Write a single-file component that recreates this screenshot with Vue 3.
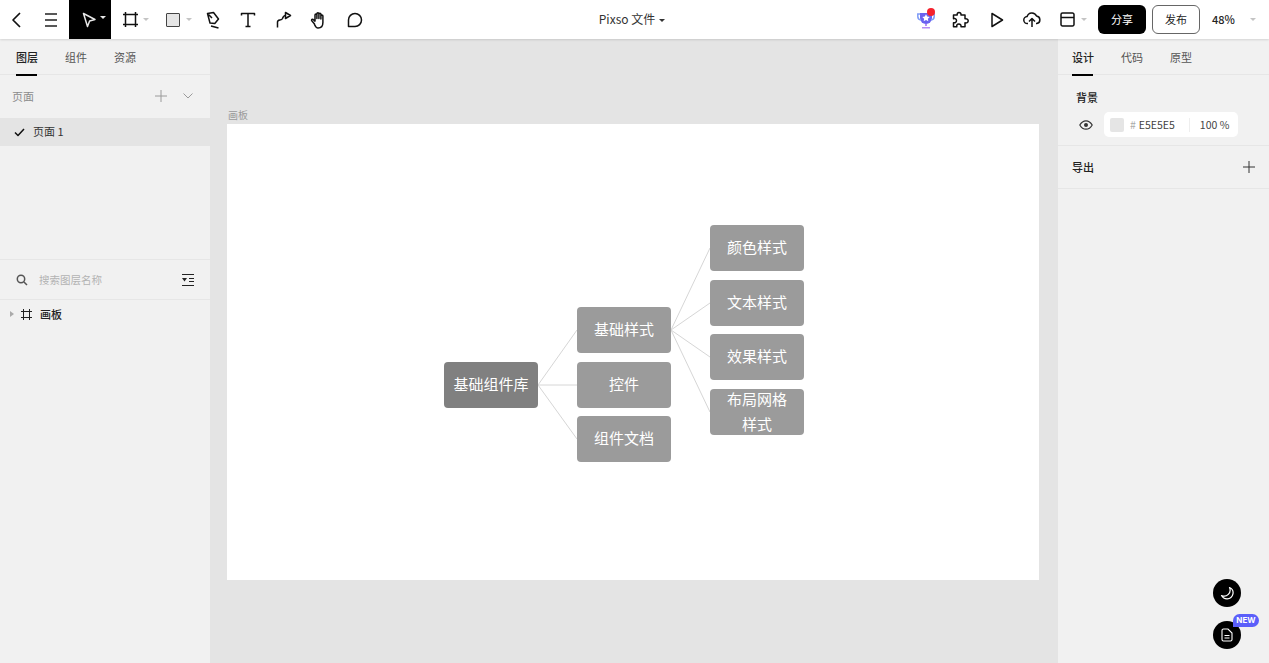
<template>
  <div class="editor">
    <header class="topbar">
      <div class="tools">
        <button class="tool tool-back" type="button">
          <svg width="16" height="18" viewBox="0 0 16 18"><path d="M11 2 4 9l7 7" class="ln back" /></svg>
        </button>
        <button class="tool tool-menu" type="button">
          <svg width="16" height="14" viewBox="0 0 16 14"><path d="M2 1h12M2 7h12M2 13h12" class="ln menu" /></svg>
        </button>
        <button class="tool tool-select" type="button">
          <svg width="16" height="16" viewBox="0 0 16 16"><path d="M2.500 1.500 14 7.500 8.600 9 6.500 14.500Z" class="ln thin white" /></svg>
          <span class="caret white"></span>
        </button>
        <button class="tool tool-drop tool-frame" type="button">
          <svg width="15" height="15" viewBox="0 0 15 15"><path d="M2.500 0v15M12.500 0v15M0 2.500h15M0 12.500h15" class="ln thin" /></svg>
          <span class="caret"></span>
        </button>
        <button class="tool tool-drop tool-shape" type="button">
          <span class="rect-icon"></span>
          <span class="caret"></span>
        </button>
        <button class="tool tool-icon" type="button">
          <svg width="16" height="18" viewBox="0 0 16 18"><path d="M2.500 2.500 8.500 1.500 13.500 8 9.800 12.500 5 12ZM2.500 2.500 7 7M6 15l7.500 2" class="ln thin" /></svg>
        </button>
        <button class="tool tool-icon" type="button">
          <svg width="16" height="16" viewBox="0 0 16 16"><path d="M1.500 3.500V1.500h13v2M8 1.500v13M5.500 14.500h5" class="ln thin" /></svg>
        </button>
        <button class="tool tool-icon" type="button">
          <svg width="16" height="18" viewBox="0 0 16 18"><path d="M1.500 16.500V11C1.500 8 5.500 10 6.500 7.500 7 6 7.500 4.500 9.500 4.500" class="ln thin" /><path d="M9.500 1.500 14.500 4.500 9.500 7.500Z" class="ln thin" /></svg>
        </button>
        <button class="tool tool-icon" type="button">
          <svg width="18" height="18" viewBox="0 0 18 18"><path d="M4.500 13 1.800 9.800c-.8-1.100.7-2.100 1.600-1.200l1.600 1.500V4c0-1.300 1.900-1.300 1.900 0v3.500V2.700c0-1.300 2-1.300 2 0v4.800V3.300c0-1.300 2-1.300 2 0v4.700-3c0-1.300 2-1.300 2 0v6.500c0 3.200-1.800 5.500-4.800 5.500H8c-1.600 0-2.500-1.200-3.500-3.500Z" class="ln thin" /></svg>
        </button>
        <button class="tool tool-icon" type="button">
          <svg width="16" height="16" viewBox="0 0 16 16"><path d="M1.500 14.500V8a6.500 6.500 0 1 1 6.500 6.500Z" class="ln thin" /></svg>
        </button>
      </div>
      <div class="doc-title">Pixso 文件<span class="caret dark"></span></div>
      <div class="actions">
        <span class="action trophy">
          <svg width="18" height="18" viewBox="0 0 18 18">
            <path d="M3 2h12v5a6 6 0 0 1-12 0Z" fill="#6a62f0" />
            <path d="M3 3H0.800v2.500C.8 7.500 2 8.800 4 9M15 3h2.200v2.500c0 2-1.200 3.300-3.200 3.500" fill="none" stroke="#7f9cf7" stroke-width="1.500" />
            <path d="M8 13h2v2H8Z" fill="#b68cf5" />
            <path d="M5 16h8v1.500H5Z" fill="#b68cf5" />
            <path d="m9 3.300 1.200 2.300 2.500.4-1.800 1.800.4 2.500L9 9.100l-2.300 1.200.4-2.500L5.300 6l2.500-.4Z" fill="#fff" />
          </svg>
          <i class="red-dot"></i>
        </span>
        <span class="action">
          <svg width="18" height="18" viewBox="0 0 18 18"><path d="M7 1.500c1.500 0 2.200 1.100 2 2.500h4v3.800c1.700-.3 3.200.3 3.200 2s-1.500 2.300-3.200 2v4h-4c.3-1.700-.6-2.800-2.200-2.800S4.400 14 4.800 15.800H1.500v-4c1.700.2 3-.6 3-2.200S3.200 7.300 1.500 7.700V4h3.700C5 2.600 5.600 1.500 7 1.500Z" class="ln thin" /></svg>
        </span>
        <span class="action">
          <svg width="14" height="16" viewBox="0 0 14 16"><path d="M2 1.500 12.500 8 2 14.500Z" class="ln thin" /></svg>
        </span>
        <span class="action">
          <svg width="18" height="16" viewBox="0 0 18 16"><path d="M5 11.500H4.500a3.500 3.500 0 0 1-.4-7A5 5 0 0 1 13.500 4a3.800 3.800 0 0 1 .3 7.500H13M9 15V7M6 9.500 9 6.500l3 3" class="ln thin" /></svg>
        </span>
        <span class="action layout">
          <svg width="15" height="15" viewBox="0 0 15 15"><path d="M1 2.500A1.500 1.500 0 0 1 2.500 1h10A1.500 1.500 0 0 1 14 2.500v10a1.500 1.500 0 0 1-1.500 1.500h-10A1.500 1.500 0 0 1 1 12.500ZM1 5.500h13" class="ln thin" /></svg>
          <span class="caret"></span>
        </span>
        <button class="btn btn-share" type="button">分享</button>
        <button class="btn btn-publish" type="button">发布</button>
        <span class="zoom">48%</span>
        <span class="caret zoom-caret"></span>
      </div>
    </header>

    <div class="workspace">
      <aside class="panel">
        <nav class="tabs tabs-left">
          <span v-for="(tab, i) in leftTabs" :key="tab" class="tab" :class="{ active: i === 0 }">{{ tab }}</span>
        </nav>
        <section class="pages">
          <div class="pages-head">
            <span>页面</span>
            <svg class="plus-grey" width="12" height="12" viewBox="0 0 12 12"><path d="M6 0v12M0 6h12" /></svg>
            <svg class="chev-grey" width="10" height="6" viewBox="0 0 10 6"><path d="m.5.500 4.500 4.500L9.500.500" /></svg>
          </div>
          <div class="page-row">
            <svg width="11" height="9" viewBox="0 0 11 9"><path d="m1 4.500 3 3L10 1" class="ln thin" /></svg>
            <span>页面 1</span>
          </div>
        </section>
        <div class="search">
          <svg width="12" height="12" viewBox="0 0 12 12"><circle cx="5" cy="5" r="3.700" class="ln thin grey" /><path d="m8 8 3 3" class="ln thin grey" /></svg>
          <span class="search-text">搜索图层名称</span>
          <svg class="filter" width="12" height="12" viewBox="0 0 12 12"><path d="M0 .500h12M0 11.500h12M7 4.500h5M7 7.500h5" stroke="#222" fill="none" /><path d="M0 4h5L2.500 7.500Z" fill="#222" /></svg>
        </div>
        <div class="layer">
          <i class="layer-caret"></i>
          <svg width="11" height="11" viewBox="0 0 11 11"><path d="M2.500 0v11M8.500 0v11M0 2.500h11M0 8.500h11" stroke="#222" fill="none" /></svg>
          <span>画板</span>
        </div>
      </aside>

      <main class="canvas">
        <span class="board-label">画板</span>
        <div class="board">
          <svg class="links" width="812" height="456" viewBox="0 0 812 456">
            <path v-for="link in links" :key="link" :d="link" />
          </svg>
          <div
            v-for="node in nodes"
            :key="node.text"
            class="node"
            :class="{ root: node.root }"
            :style="{ left: node.x + 'px', top: node.y + 'px' }"
          >{{ node.text }}</div>
        </div>
      </main>

      <aside class="panel panel-right">
        <nav class="tabs tabs-right">
          <span v-for="(tab, i) in rightTabs" :key="tab" class="tab" :class="{ active: i === 0 }">{{ tab }}</span>
        </nav>
        <section class="bg-section">
          <h3>背景</h3>
          <div class="bg-row">
            <svg width="14" height="10" viewBox="0 0 14 10"><path d="M.8 5C2.500 2 4.500.8 7 .8S11.500 2 13.200 5C11.500 8 9.500 9.200 7 9.200S2.500 8 .8 5Z" class="ln small" /><circle cx="7" cy="5" r="2" fill="#333" /></svg>
            <div class="color-field">
              <i class="swatch"></i>
              <span class="hash">#</span>
              <span class="hex">E5E5E5</span>
              <i class="divider"></i>
              <span class="percent">100 %</span>
            </div>
          </div>
        </section>
        <section class="export">
          <h3>导出</h3>
          <svg width="12" height="12" viewBox="0 0 12 12"><path d="M6 0v12M0 6h12" stroke="#333" fill="none" /></svg>
        </section>
        <div class="float-buttons">
          <button class="round" type="button">
            <svg width="14" height="14" viewBox="0 0 14 14"><path d="M9.500 1.500A6 6 0 0 1 1.500 9.500 6.200 6.200 0 0 0 7 12.800a5.900 5.900 0 0 0 2.500-11.300Z" fill="none" stroke="#fff" stroke-width="1.200" stroke-linejoin="round" /></svg>
          </button>
          <button class="round" type="button">
            <svg width="12" height="14" viewBox="0 0 12 14"><path d="M1 2.500A1.500 1.500 0 0 1 2.500 1H7l4 4v6.500A1.500 1.500 0 0 1 9.500 13h-7A1.500 1.500 0 0 1 1 11.500ZM3.500 7.500h5M3.500 10h5" fill="none" stroke="#fff" stroke-width="1.100" /></svg>
            <span class="badge">NEW</span>
          </button>
        </div>
      </aside>
    </div>
  </div>
</template>

<script setup>
const leftTabs = ['图层', '组件', '资源']
const rightTabs = ['设计', '代码', '原型']

const nodes = [
  { text: '基础组件库', x: 217, y: 238, root: true },
  { text: '基础样式', x: 350, y: 183 },
  { text: '控件', x: 350, y: 238 },
  { text: '组件文档', x: 350, y: 292 },
  { text: '颜色样式', x: 483, y: 101 },
  { text: '文本样式', x: 483, y: 156 },
  { text: '效果样式', x: 483, y: 210 },
  { text: '布局网格样式', x: 483, y: 265 },
]

// root -> second level, then first branch -> third level
const links = [
  'M311 261 350 206',
  'M311 261H350',
  'M311 261 350 315',
  'M444 206 483 124',
  'M444 206 483 179',
  'M444 206 483 233',
  'M444 206 483 288',
]
</script>

<style scoped>
.editor {
  display: flex;
  flex-direction: column;
  width: 1269px;
  height: 663px;
  overflow: hidden;
  background: #e4e4e4;
  color: #222;
  font-family: "Noto Sans CJK SC", "Noto Sans", sans-serif;
  font-size: 12px;
}

button {
  padding: 0;
  border: 0;
  background: none;
  font: inherit;
  cursor: pointer;
}

.ln {
  fill: none;
  stroke: #111;
  stroke-width: 2;
  stroke-linejoin: round;
}

.ln.back {
  stroke-width: 1.700;
}

.ln.menu {
  stroke: #222;
  stroke-width: 1.500;
}

.ln.thin {
  stroke-width: 1.500;
}

.ln.small {
  stroke: #333;
  stroke-width: 1.200;
}

.ln.white {
  stroke: #e8e8e8;
}

.ln.grey {
  stroke: #555;
}

.topbar {
  display: flex;
  flex: none;
  align-items: center;
  height: 39px;
  background: #fff;
  box-shadow: 0 1px 2px rgba(0, 0, 0, 0.12);
  position: relative;
  z-index: 2;
}

.tools {
  display: flex;
  flex: none;
  width: 373px;
  height: 39px;
}

.tool {
  display: flex;
  align-items: center;
  justify-content: center;
  height: 39px;
}

.tool-back {
  width: 33px;
}

.tool-menu {
  width: 36px;
}

.tool-select {
  width: 42px;
  padding-left: 6px;
  background: #000;
  gap: 3px;
}

.tool-drop {
  justify-content: flex-start;
  width: 42px;
}

.tool-frame {
  gap: 5px;
  padding-left: 12px;
}

.tool-shape {
  gap: 6px;
  padding-left: 13px;
}

.tool-icon {
  width: 35.500px;
}

.caret {
  display: inline-block;
  flex: none;
  width: 0;
  height: 0;
  border-left: 3px solid transparent;
  border-right: 3px solid transparent;
  border-top: 3px solid #c4c4c4;
}

.caret.white {
  border-top-color: #e8e8e8;
  margin-bottom: 4px;
}

.caret.dark {
  border-top-color: #333;
  margin-left: 4px;
  vertical-align: 2px;
}

.rect-icon {
  flex: none;
  width: 14px;
  height: 14px;
  box-sizing: border-box;
  background: #e5e5e5;
  border: 1px solid #444;
  border-radius: 1px;
}

.doc-title {
  flex: 1;
  padding: 0 16px 3px 0;
  text-align: center;
  font-size: 12px;
  color: #333;
}

.actions {
  display: flex;
  flex: none;
  align-items: center;
  width: 361px;
  padding-left: 1px;
}

.action {
  display: flex;
  align-items: center;
  justify-content: center;
  width: 35.500px;
  height: 39px;
}

.trophy {
  position: relative;
}

.red-dot {
  position: absolute;
  top: 8px;
  right: 9px;
  width: 8px;
  height: 8px;
  border-radius: 50%;
  background: #f5222d;
}

.layout {
  width: 36px;
  gap: 6px;
  padding-left: 5px;
}

.btn {
  height: 29px;
  width: 48px;
  padding-bottom: 2px;
  border-radius: 6px;
  font-size: 11px;
}

.btn-share {
  margin-left: 7px;
  background: #000;
  color: #fff;
}

.btn-publish {
  margin-left: 6px;
  background: #fff;
  border: 1px solid #666;
  color: #222;
}

.zoom {
  margin-left: 12px;
  padding-bottom: 2px;
  font-size: 11px;
  font-weight: 500;
  color: #222;
}

.zoom-caret {
  margin-left: 15px;
}

.workspace {
  display: flex;
  flex: 1;
  min-height: 0;
}

.panel {
  display: flex;
  flex: none;
  flex-direction: column;
  width: 210px;
  background: #f1f1f1;
}

.panel-right {
  position: relative;
  width: 211px;
}

.tabs {
  display: flex;
  flex: none;
  height: 36px;
  border-bottom: 1px solid #e6e6e6;
  box-sizing: border-box;
}

.tabs-left {
  gap: 28px;
  padding-left: 16px;
}

.tabs-right {
  gap: 28px;
  padding-left: 14px;
}

.tab {
  width: 21px;
  height: 35px;
  line-height: 37px;
  font-size: 11px;
  white-space: nowrap;
  color: #555;
}

.tab.active {
  color: #222;
  font-weight: 500;
  border-bottom: 2px solid #000;
}

.pages {
  height: 185px;
  flex: none;
  border-bottom: 1px solid #e6e6e6;
  box-sizing: border-box;
}

.pages-head {
  display: flex;
  align-items: center;
  height: 43px;
  padding: 0 17px 1px 12px;
  box-sizing: border-box;
  font-size: 11px;
  color: #8c8c8c;
}

.plus-grey {
  margin-left: auto;
  stroke: #9a9a9a;
  fill: none;
}

.chev-grey {
  margin-left: 16px;
  stroke: #9a9a9a;
  fill: none;
}

.page-row {
  display: flex;
  align-items: center;
  gap: 8px;
  height: 28px;
  padding-left: 14px;
  background: #e4e4e4;
  font-size: 11px;
  color: #333;
}

.page-row span {
  margin-bottom: 2px;
}

.search {
  display: flex;
  flex: none;
  align-items: center;
  height: 40px;
  padding: 0 16px;
  border-bottom: 1px solid #e6e6e6;
  box-sizing: border-box;
}

.search-text {
  margin-left: 11px;
  font-size: 10.500px;
  color: #b3b3b3;
}

.filter {
  margin-left: auto;
}

.layer {
  display: flex;
  align-items: center;
  height: 28px;
  padding-left: 10px;
  font-size: 11px;
  font-weight: 500;
}

.layer-caret {
  width: 0;
  height: 0;
  margin-right: 7px;
  border-top: 3px solid transparent;
  border-bottom: 3px solid transparent;
  border-left: 4px solid #aaa;
}

.layer span {
  margin-left: 8px;
}

.canvas {
  display: flex;
  flex: 1;
  flex-direction: column;
  align-items: flex-start;
  padding: 69px 0 0 17px;
  min-width: 0;
}

.board-label {
  height: 16px;
  margin-left: 1px;
  line-height: 13px;
  font-size: 10px;
  color: #999;
}

.board {
  position: relative;
  flex: none;
  width: 812px;
  height: 456px;
  background: #fff;
}

.links {
  position: absolute;
  inset: 0;
  fill: none;
  stroke: #d6d6d6;
  stroke-width: 1;
}

.node {
  position: absolute;
  display: flex;
  align-items: center;
  justify-content: center;
  width: 94px;
  height: 46px;
  padding: 0 10px 3px;
  box-sizing: border-box;
  border-radius: 4px;
  background: #9b9b9b;
  color: #fff;
  font-size: 15px;
  line-height: 25px;
  text-align: center;
}

.node.root {
  background: #808080;
  padding: 0 5px 3px;
}

.bg-section {
  flex: none;
  height: 71px;
  padding: 14px 0 0 18px;
  border-bottom: 1px solid #e6e6e6;
  box-sizing: border-box;
}

h3 {
  margin: 0;
  font-size: 11px;
  font-weight: 500;
  line-height: 16px;
  color: #222;
}

.bg-row {
  display: flex;
  align-items: center;
  gap: 11px;
  margin-top: 7px;
  margin-left: 3px;
}

.color-field {
  display: flex;
  align-items: center;
  width: 134px;
  height: 25px;
  border-radius: 5px;
  background: #fff;
  box-sizing: border-box;
  padding-left: 6px;
  font-size: 10.500px;
  color: #444;
}

.swatch {
  width: 14px;
  height: 14px;
  border-radius: 2px;
  background: #e5e5e5;
}

.hash {
  margin-left: 6px;
  color: #aaa;
}

.hex {
  margin-left: 3px;
  width: 48px;
}

.divider {
  width: 1px;
  height: 14px;
  margin-left: 2px;
  background: #eee;
}

.percent {
  margin-left: 10px;
}

.export {
  display: flex;
  flex: none;
  align-items: center;
  justify-content: space-between;
  height: 43px;
  padding: 0 14px;
  border-bottom: 1px solid #e6e6e6;
  box-sizing: border-box;
}

.float-buttons {
  position: absolute;
  right: 28px;
  bottom: 14px;
  display: flex;
  flex-direction: column;
  gap: 14px;
}

.round {
  position: relative;
  display: flex;
  align-items: center;
  justify-content: center;
  width: 28px;
  height: 28px;
  border-radius: 50%;
  background: #000;
}

.badge {
  position: absolute;
  top: -7px;
  left: 20px;
  width: 26px;
  height: 13px;
  border-radius: 7px 7px 7px 0;
  background: #5b5ffa;
  color: #fff;
  font-family: "Inter", sans-serif;
  font-size: 8px;
  font-weight: 700;
  line-height: 13px;
  text-align: center;
}
</style>
